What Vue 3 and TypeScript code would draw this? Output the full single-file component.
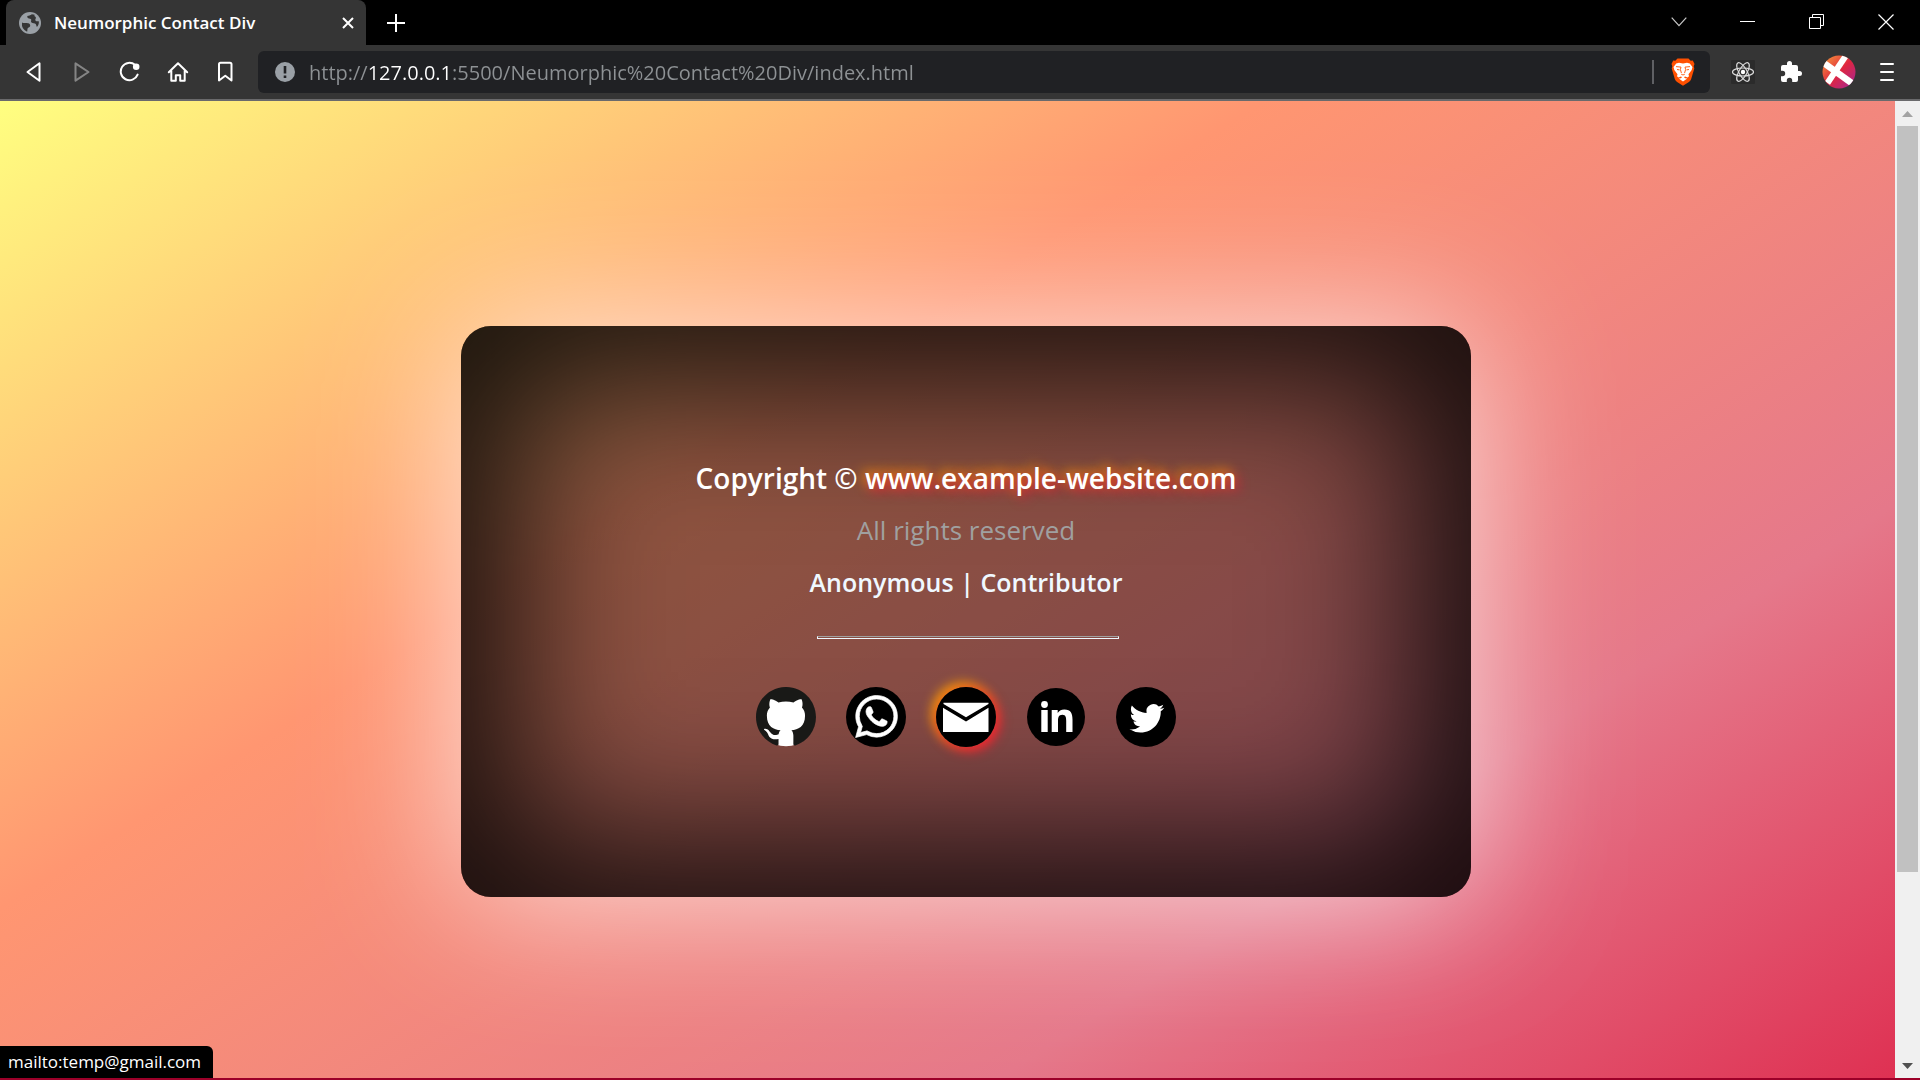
<script setup lang="ts">
import { ref } from 'vue'

const tabTitle = 'Neumorphic Contact Div'
const address = ref('http://127.0.0.1:5500/Neumorphic%20Contact%20Div/index.html')
const status = 'mailto:temp@gmail.com'
</script>

<template>
  <div class="browser">
    <header class="tabstrip">
      <div class="tab">
        <svg class="favicon" width="22" height="22" viewBox="0 0 22 22" aria-hidden="true">
          <circle cx="11" cy="11" r="11" fill="#9aa0a6" />
          <path d="M3 10.5c1 .8 5.2.3 6.4.8 1.600.7 2.100 1.600 1.700 3-.5 1.400-2.100 1-2.500 2.300-.3 1-.1 2.200-.5 3.200A9 9 0 0 1 3 10.500Z" fill="#353535" />
          <path d="M12.800 2.200c-1.400 1-2.300 1.400-3.800 1.600-1.200.2-1 1.900.2 2.400 1.200.5 2.600.2 3 1.300.4 1.200-.8 1.900.3 3 1.200 1.100 3.300.3 4.200 1.500.6.900.5 1.700 1.200 3 1.600-1.600 2.200-3.900 1.900-5.700-1-.2-2.600.3-3.300-.8-.8-1.200.8-1.800.3-3.200-.3-.8-1.300-.7-1.400-1.500 0-.6.300-.9.300-1.100-.8-.3-1.700-.5-2.900-.5Z" fill="#353535" />
        </svg>
        <span class="tab-title">{{ tabTitle }}</span>
        <button class="tab-close" aria-label="Close tab">
          <svg width="12" height="12" viewBox="0 0 12 12"><path d="M1 1l10 10M11 1L1 11" stroke="#fff" stroke-width="2" /></svg>
        </button>
      </div>
      <button class="new-tab" aria-label="New tab">
        <svg width="18" height="18" viewBox="0 0 18 18"><path d="M9 0v18M0 9h18" stroke="#fff" stroke-width="2" /></svg>
      </button>
      <div class="window-controls">
        <button aria-label="Search tabs">
          <svg width="16" height="10" viewBox="0 0 16 10"><path d="M.7.7 8 8.700 15.300.7" fill="none" stroke="#c8c8c8" stroke-width="1.200" /></svg>
        </button>
        <button aria-label="Minimize">
          <svg width="15" height="15" viewBox="0 0 15 15"><path d="M0 7.500h15" stroke="#fff" /></svg>
        </button>
        <button aria-label="Restore">
          <svg width="15" height="15" viewBox="0 0 15 15"><path d="M.5 3.500h11v11H.5zM3.500 3.500v-3h11v11h-3" fill="none" stroke="#fff" /></svg>
        </button>
        <button aria-label="Close window">
          <svg width="16" height="16" viewBox="0 0 16 16"><path d="M.5.5l15 15M15.500.5l-15 15" stroke="#fff" stroke-width="1.200" /></svg>
        </button>
      </div>
    </header>

    <nav class="toolbar">
      <button aria-label="Back">
        <svg width="20" height="22" viewBox="0 0 20 22"><path d="M15.500 2.300v17.400L3.500 11Z" fill="none" stroke="#fff" stroke-width="2" stroke-linejoin="round" /></svg>
      </button>
      <button aria-label="Forward">
        <svg width="20" height="22" viewBox="0 0 20 22"><path d="M3.500 2.300v17.400L16.500 11Z" fill="none" stroke="#858585" stroke-width="2" stroke-linejoin="round" /></svg>
      </button>
      <button aria-label="Reload">
        <svg width="22" height="22" viewBox="0 0 22 22"><path d="M16 3.800A8.700 8.700 0 1 0 18.600 13.600" fill="none" stroke="#fff" stroke-width="2" stroke-linecap="round" /><circle cx="17.200" cy="5.800" r="3.300" fill="#fff" /></svg>
      </button>
      <button aria-label="Home">
        <svg width="22" height="22" viewBox="0 0 22 22"><path d="M1.800 11.200 11 2.300l9.200 8.900M4.300 10v9.700h4.500v-5.500h4.400v5.500h4.500V10" fill="none" stroke="#fff" stroke-width="2" stroke-linecap="round" stroke-linejoin="round" /></svg>
      </button>
      <button aria-label="Bookmark">
        <svg width="18" height="22" viewBox="0 0 18 22"><path d="M3.500 1.800h9.500a1.500 1.500 0 0 1 1.500 1.500v16.200L8.300 14.800 2 19.500V3.300a1.500 1.500 0 0 1 1.500-1.500Z" fill="none" stroke="#fff" stroke-width="2" stroke-linejoin="round" /></svg>
      </button>

      <div class="omnibox">
        <svg width="20" height="20" viewBox="0 0 20 20" aria-hidden="true"><circle cx="10" cy="10" r="10" fill="#9aa0a6" /><path d="M10 4v7.500M10 13.500v2.500" stroke="#202124" stroke-width="2.600" /></svg>
        <input v-model="address" class="address" type="text" aria-label="Address" spellcheck="false" />
        <span class="divider"></span>
        <button class="shield" aria-label="Brave Shields">
          <svg width="24" height="28" viewBox="0 0 24 28">
            <path d="M6.500.5h11l2.200 2.300 2.100-.2 1.700 3.400-.8 2.300.6 2.200-3.200 10.800c-.4 1.200-1.200 2.100-2.200 2.800L12 27.700l-5.900-3.600c-1-.7-1.800-1.600-2.200-2.800L.7 10.500l.6-2.200L.5 6l1.700-3.400 2.100.2Z" fill="#ff5000" />
            <path d="M8 4.800 12 5.500l4-.7 2.800.6L21.500 9l-.8 3-3.200 4.300.5 1.900-1.500 1.200-2.500-.8-1 .6 1.200 1 2.100.3L12 23.500l-4.300-3 2.100-.3 1.200-1-1-.6-2.500.8L6 18.200l.5-1.900L3.300 12l-.8-3 2.700-3.600Z" fill="#fff" />
            <path d="M5 8.600l5 .5-.6 2.400 1 3.500M19 8.600l-5 .5.6 2.400-1 3.500M6 11.500l2.500.4M18 11.500l-2.500.4M10.200 16.200l1.800.8 1.800-.8" fill="none" stroke="#ff5000" stroke-width=".9" />
          </svg>
        </button>
      </div>

      <button aria-label="React Developer Tools">
        <svg width="24" height="24" viewBox="0 0 24 24">
          <rect width="24" height="24" rx="1" fill="#2b2b2b" />
          <g fill="none" stroke="#dcdcdc" stroke-width="1.200">
            <ellipse cx="12" cy="12" rx="10.500" ry="4" />
            <ellipse cx="12" cy="12" rx="10.500" ry="4" transform="rotate(60 12 12)" />
            <ellipse cx="12" cy="12" rx="10.500" ry="4" transform="rotate(120 12 12)" />
          </g>
          <circle cx="12" cy="12" r="2.200" fill="#fff" />
        </svg>
      </button>
      <button aria-label="Extensions">
        <svg width="24" height="24" viewBox="0 0 24 24"><path d="M20.500 11H19V7a2 2 0 0 0-2-2h-4V3.500a2.500 2.500 0 0 0-5 0V5H4a2 2 0 0 0-2 2v3.800h1.500a2.700 2.700 0 0 1 0 5.400H2V20a2 2 0 0 0 2 2h3.800v-1.500a2.700 2.700 0 0 1 5.400 0V22H17a2 2 0 0 0 2-2v-4h1.500a2.500 2.500 0 0 0 0-5Z" fill="#fff" /></svg>
      </button>
      <button aria-label="Profile">
        <svg width="34" height="34" viewBox="0 0 34 34">
          <defs>
            <linearGradient id="avatar" x1="0" y1="0" x2="1" y2="1">
              <stop offset="0" stop-color="#f8a13a" />
              <stop offset=".5" stop-color="#e0263f" />
              <stop offset="1" stop-color="#a0269b" />
            </linearGradient>
            <clipPath id="avatar-clip"><circle cx="17" cy="17" r="16.500" /></clipPath>
          </defs>
          <circle cx="17" cy="17" r="16.500" fill="url(#avatar)" />
          <g clip-path="url(#avatar-clip)" stroke="#fff">
            <path d="M25-1 5.500 28" stroke-width="6" />
            <path d="M1 7.500 31 29" stroke-width="6.500" />
          </g>
        </svg>
      </button>
      <button aria-label="Menu">
        <svg width="14" height="20" viewBox="0 0 14 20"><path d="M1 2h12M1 10h12M1 18h12" stroke="#fff" stroke-width="2" stroke-linecap="round" /></svg>
      </button>
    </nav>

    <div class="viewport">
      <main class="page">
        <section class="card">
          <p class="copyright">Copyright © <a class="site" href="#">www.example-website.com</a></p>
          <p class="rights">All rights reserved</p>
          <p class="author">Anonymous | Contributor</p>
          <hr class="rule" />
          <div class="social">
            <a href="#" aria-label="GitHub">
              <svg width="60" height="60" viewBox="0 0 24 24">
                <circle cx="12" cy="12" r="11.700" fill="#fff" />
                <path transform="translate(0 -.3)" fill="#191917" d="M12 .297c-6.630 0-12 5.373-12 12 0 5.303 3.438 9.800 8.205 11.385.6.113.82-.258.82-.577 0-.285-.01-1.040-.015-2.040-3.338.724-4.042-1.610-4.042-1.610C4.422 18.070 3.633 17.700 3.633 17.700c-1.087-.744.084-.729.084-.729 1.205.084 1.838 1.236 1.838 1.236 1.070 1.835 2.809 1.305 3.495.998.108-.776.417-1.305.760-1.605-2.665-.300-5.466-1.332-5.466-5.930 0-1.310.465-2.380 1.235-3.220-.135-.303-.540-1.523.105-3.176 0 0 1.005-.322 3.300 1.230.960-.267 1.980-.399 3-.405 1.020.006 2.040.138 3 .405 2.280-1.552 3.285-1.230 3.285-1.230.645 1.653.240 2.873.120 3.176.765.840 1.230 1.910 1.230 3.220 0 4.610-2.805 5.625-5.475 5.920.420.360.810 1.096.810 2.220 0 1.606-.015 2.896-.015 3.286 0 .315.210.690.825.570C20.565 22.092 24 17.592 24 12.297c0-6.627-5.373-12-12-12" />
              </svg>
            </a>
            <a href="#" aria-label="WhatsApp">
              <svg width="60" height="60" viewBox="0 0 60 60">
                <circle cx="30" cy="30" r="30" />
                <path transform="translate(9.500 8.500) scale(1.750)" fill="#fff" stroke="#fff" stroke-width=".4" d="M17.472 14.382c-.297-.149-1.758-.867-2.030-.967-.273-.099-.471-.148-.670.150-.197.297-.767.966-.940 1.164-.173.199-.347.223-.644.075-.297-.150-1.255-.463-2.390-1.475-.883-.788-1.480-1.761-1.653-2.059-.173-.297-.018-.458.130-.606.134-.133.298-.347.446-.520.149-.174.198-.298.298-.497.099-.198.050-.371-.025-.520-.075-.149-.669-1.612-.916-2.207-.242-.579-.487-.500-.669-.510-.173-.008-.371-.010-.570-.010-.198 0-.520.074-.792.372-.272.297-1.040 1.016-1.040 2.479 0 1.462 1.065 2.875 1.213 3.074.149.198 2.096 3.200 5.077 4.487.709.306 1.262.489 1.694.625.712.227 1.360.195 1.871.118.571-.085 1.758-.719 2.006-1.413.248-.694.248-1.289.173-1.413-.074-.124-.272-.198-.570-.347m-5.421 7.403h-.004a9.870 9.870 0 0 1-5.031-1.378l-.361-.214-3.741.982.998-3.648-.235-.374a9.860 9.860 0 0 1-1.510-5.260c.001-5.450 4.436-9.884 9.888-9.884 2.640 0 5.122 1.030 6.988 2.898a9.825 9.825 0 0 1 2.893 6.994c-.003 5.450-4.437 9.884-9.885 9.884m8.413-18.297A11.815 11.815 0 0 0 12.050 0C5.495 0 .160 5.335.157 11.892c0 2.096.547 4.142 1.588 5.945L.057 24l6.305-1.654a11.882 11.882 0 0 0 5.683 1.448h.005c6.554 0 11.890-5.335 11.893-11.893a11.821 11.821 0 0 0-3.480-8.413z" />
              </svg>
            </a>
            <a class="active" href="mailto:temp@gmail.com" aria-label="Email">
              <svg width="60" height="60" viewBox="0 0 60 60">
                <circle cx="30" cy="30" r="30" />
                <path fill="#fff" d="M7.500 15.700h45v1.200L30 30.200 7.500 16.900ZM7 20.800l23 13.700 22.500-13.700V45H7Z" />
              </svg>
            </a>
            <a href="#" aria-label="LinkedIn">
              <svg width="60" height="60" viewBox="0 0 60 60">
                <circle cx="30" cy="30" r="29" />
                <circle cx="18.500" cy="17.500" r="3.400" fill="#fff" />
                <path fill="#fff" d="M15.300 23h6.400v22h-6.400ZM25.700 23h6v3c1-1.900 3.300-3.500 6.700-3.500 6.500 0 8.100 4 8.100 10V45h-6.300V33.800c0-3-.3-6-3.900-6s-4.300 3-4.300 5.900V45h-6.300Z" />
              </svg>
            </a>
            <a href="#" aria-label="Twitter">
              <svg width="60" height="60" viewBox="0 0 60 60">
                <circle cx="30" cy="30" r="30" />
                <path transform="translate(13.500 14) scale(1.450)" fill="#fff" d="M23.953 4.570a10 10 0 0 1-2.825.775 4.958 4.958 0 0 0 2.163-2.723c-.951.555-2.005.959-3.127 1.184a4.920 4.920 0 0 0-8.384 4.482C7.690 8.095 4.067 6.130 1.640 3.162a4.822 4.822 0 0 0-.666 2.475c0 1.710.870 3.213 2.188 4.096a4.904 4.904 0 0 1-2.228-.616v.060a4.923 4.923 0 0 0 3.946 4.827 4.996 4.996 0 0 1-2.212.085 4.936 4.936 0 0 0 4.604 3.417 9.867 9.867 0 0 1-6.102 2.105c-.390 0-.779-.023-1.170-.067a13.995 13.995 0 0 0 7.557 2.209c9.053 0 13.998-7.496 13.998-13.985 0-.210 0-.420-.015-.630A9.935 9.935 0 0 0 24 4.590z" />
              </svg>
            </a>
          </div>
        </section>
      </main>
      <div class="scrollbar" aria-hidden="true">
        <svg width="25" height="25" viewBox="0 0 25 25"><path d="m7 16 5.500-6L18 16Z" fill="#a3a3a3" /></svg>
        <div class="track"><div class="thumb"></div></div>
        <svg width="25" height="25" viewBox="0 0 25 25"><path d="m7 10 5.500 6L18 10Z" fill="#505050" /></svg>
      </div>
      <div class="status">{{ status }}</div>
    </div>
  </div>
</template>

<style>
body {
  margin: 0;
  background: #000;
}
</style>

<style scoped>
.browser {
  display: flex;
  flex-direction: column;
  min-height: 100vh;
  box-sizing: border-box;
  border-bottom: 2px solid #9c0029;
  font-family: "Segoe UI", "Open Sans", "Noto Sans", sans-serif;
  color: #fff;
}

button {
  display: flex;
  align-items: center;
  justify-content: center;
  padding: 0;
  border: 0;
  background: none;
  cursor: pointer;
}

.tabstrip {
  display: flex;
  align-items: center;
  height: 45px;
  padding-left: 6px;
  background: #000;
}

.tab {
  display: flex;
  align-items: center;
  align-self: stretch;
  width: 360px;
  box-sizing: border-box;
  padding: 0 6px 0 13px;
  border-radius: 8px 8px 0 0;
  background: #353535;
}

.tab-title {
  flex: 1;
  margin-left: 13px;
  font-size: 17px;
  font-weight: 600;
  line-height: 24px;
  white-space: nowrap;
}

.tab-close {
  width: 24px;
  height: 24px;
}

.new-tab {
  width: 60px;
  height: 45px;
}

.window-controls {
  display: flex;
  align-self: stretch;
  margin-left: auto;
}

.window-controls button {
  width: 69px;
  padding-bottom: 2px;
}

.toolbar {
  display: flex;
  align-items: center;
  height: 54px;
  padding: 0 9px 0 10px;
  border-bottom: 2px solid #6a6a6c;
  background: #353535;
}

.toolbar > button {
  width: 48px;
  height: 48px;
}

.omnibox {
  display: flex;
  flex: 1;
  align-items: center;
  height: 42px;
  box-sizing: border-box;
  margin: 0 9px 0 8px;
  padding: 0 15px 0 17px;
  border-radius: 6px;
  background: #202124;
}

.address {
  flex: 1;
  min-width: 0;
  height: 32px;
  margin-left: 14px;
  padding: 0;
  border: 0;
  outline: 0;
  font: 20px "Segoe UI", "Open Sans", "Noto Sans", sans-serif;
  color: transparent;
  background: linear-gradient(90deg, #8e9295 60px, #fff 60px, #fff 142px, #8e9295 142px);
  background-clip: text;
  -webkit-background-clip: text;
}

.divider {
  width: 2px;
  height: 24px;
  margin-right: 17px;
  background: #5f6064;
}

.viewport {
  position: relative;
  display: flex;
  flex: 1;
  overflow: hidden;
}

.page {
  flex: 1;
  box-sizing: border-box;
  padding: 225px 0 181px 37px;
  background: linear-gradient(to bottom right, #ffff80, #ff9671, #e5788a, crimson) 0 0 / 100% 124%;
}

.card {
  display: flex;
  flex-direction: column;
  align-items: center;
  width: 1010px;
  max-width: 100%;
  box-sizing: border-box;
  margin: 0 auto;
  padding: 126px 24px 150px;
  border-radius: 30px;
  background: rgba(0, 0, 0, 0.44);
  box-shadow: 0 0 150px rgba(255, 255, 255, 0.75), inset 0 0 150px 60px rgba(0, 0, 0, 0.8);
}

.card p {
  margin: 0;
  line-height: 52px;
  text-align: center;
}

.copyright {
  font-size: 28px;
  font-weight: 600;
}

.site {
  color: #fff;
  text-decoration: none;
  text-shadow: 3px 3px 12px crimson, -3px -3px 12px orange;
}

.rights {
  font-size: 26px;
  color: #a0a0a0;
}

.author {
  font-size: 25px;
  font-weight: 600;
  color: aliceblue;
}

.rule {
  width: 300px;
  height: 1px;
  margin: 28px 0 48px 4px;
  border: 1px solid aliceblue;
  border-top-color: #a0a0a0;
}

.social {
  display: flex;
  gap: 30px;
}

.social a {
  display: flex;
  border-radius: 50%;
}

.social .active {
  box-shadow: 3px 3px 12px 1px #f01e32, -3px -3px 12px 1px orange;
}

.scrollbar {
  display: flex;
  flex-direction: column;
  width: 25px;
  background: #f0f0f0;
}

.track {
  flex: 1;
  padding: 0 2px;
}

.thumb {
  height: 80.5%;
  background: #c1c1c1;
}

.status {
  position: absolute;
  bottom: 0;
  left: 0;
  padding: 0 12px 0 8px;
  border-radius: 0 6px 0 0;
  font-size: 17px;
  line-height: 32px;
  background: #000;
}
</style>
